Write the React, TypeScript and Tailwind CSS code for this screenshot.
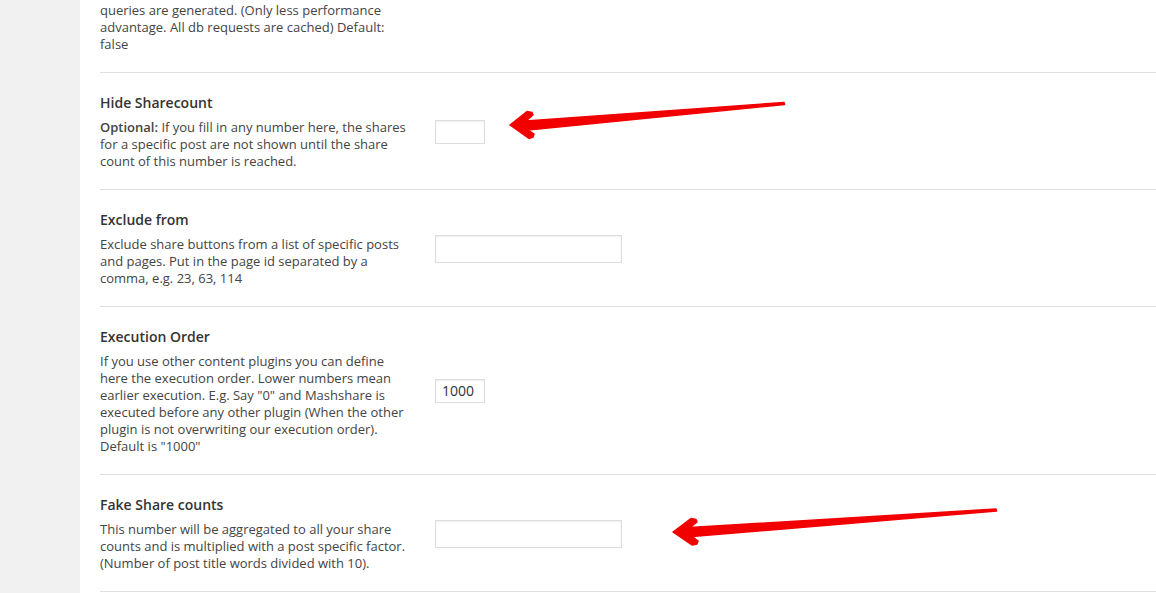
const font = { fontFamily: '"Open Sans", "DejaVu Sans", sans-serif' };

type Row = {
  title: string;
  desc: React.ReactNode;
  input: 'small' | 'wide';
  value?: string;
};

const rows: Row[] = [
  {
    title: 'Hide Sharecount',
    desc: (
      <>
        <b className="font-semibold">Optional:</b> If you fill in any number here, the shares for a specific post are not
        shown until the share count of this number is reached.
      </>
    ),
    input: 'small',
  },
  {
    title: 'Exclude from',
    desc: 'Exclude share buttons from a list of specific posts and pages. Put in the page id separated by a comma, e.g. 23, 63, 114',
    input: 'wide',
  },
  {
    title: 'Execution Order',
    desc: 'If you use other content plugins you can define here the execution order. Lower numbers mean earlier execution. E.g. Say "0" and Mashshare is executed before any other plugin (When the other plugin is not overwriting our execution order). Default is "1000"',
    input: 'small',
    value: '1000',
  },
  {
    title: 'Fake Share counts',
    desc: 'This number will be aggregated to all your share counts and is multiplied with a post specific factor. (Number of post title words divided with 10).',
    input: 'wide',
  },
];

function Field({ kind, value }: { kind: 'small' | 'wide'; value?: string }) {
  return (
    <div
      className={`border border-[#dddddd] bg-white shadow-[inset_0_1px_2px_rgba(0,0,0,0.07)] px-[6px] text-[14px] leading-[22px] text-[#333] ${
        kind === 'small' ? 'w-[50px] h-[24px]' : 'w-[187px] h-[28px]'
      }`}
    >
      {value}
    </div>
  );
}

export default function App() {
  return (
    <div className="relative flex h-[593px] w-[1156px] overflow-hidden bg-white" style={font}>
      <aside className="w-[80px] shrink-0 bg-[#f1f1f1]" />
      <main className="flex-1 pl-[20px]">
        <div className="border-b border-[#dfdfdf] pt-[2px] pb-[19px]">
          <p className="w-[310px] text-[13px] leading-[17px] text-[#444]">
            queries are generated. (Only less performance advantage. All db requests are cached) Default: false
          </p>
        </div>
        {rows.map((r) => (
          <div key={r.title} className="flex items-center border-b border-[#dfdfdf] pt-[20px] pb-[19px]">
            <div className="w-[310px] shrink-0">
              <p className="text-[14px] leading-[20px] font-semibold text-[#333]">{r.title}</p>
              <p className="mt-[6px] text-[13px] leading-[17px] text-[#444]">{r.desc}</p>
            </div>
            <div className="ml-[25px]">
              <Field kind={r.input} value={r.value} />
            </div>
          </div>
        ))}
      </main>

      <svg className="pointer-events-none absolute inset-0" width="1156" height="593" viewBox="0 0 1156 593">
        <g fill="#f20000" stroke="#f20000" strokeWidth="1.5" strokeLinejoin="round">
          <polygon points="510,125 527,111.5 532,112.5 533,115 526,121 784,102.5 784.5,104.5 528,130 534,134 533,137 529,138.5" />
          <polygon points="673,532 691,518.5 696,519.5 697,522 690,527.5 996,509 996.5,511 692,536.5 698,541 697,544 692,545" />
        </g>
      </svg>
    </div>
  );
}
